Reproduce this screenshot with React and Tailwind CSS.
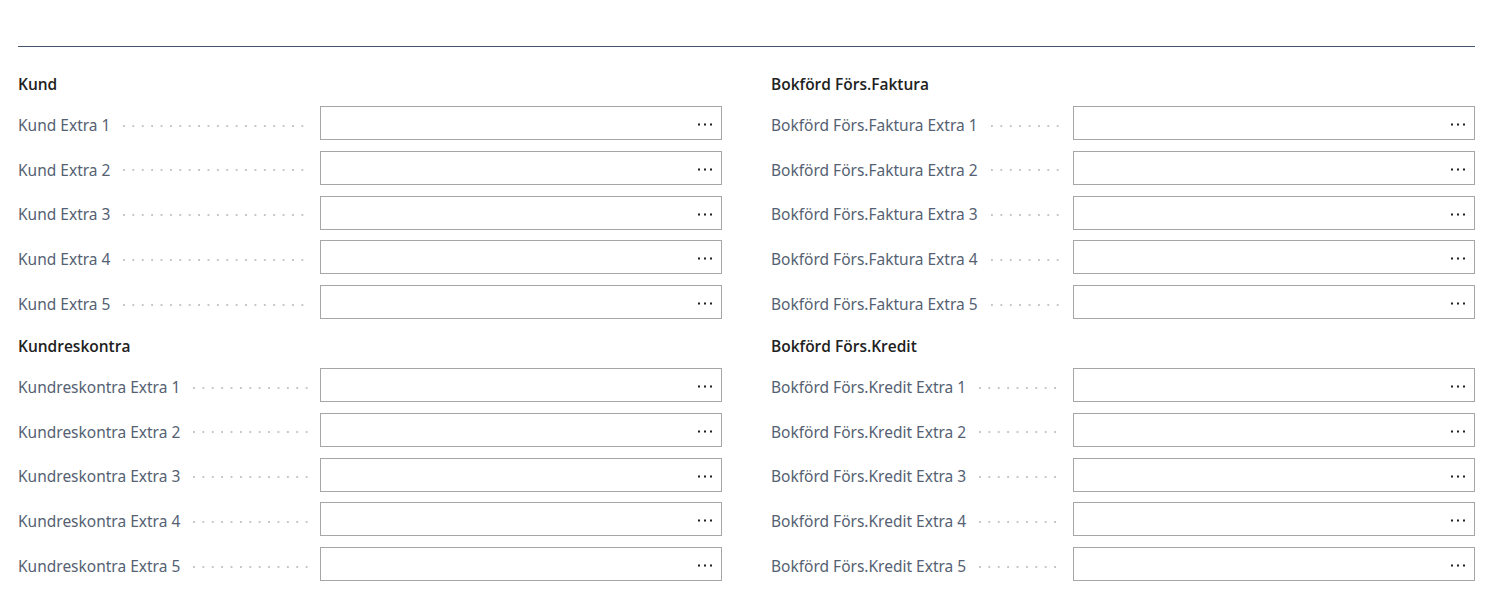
const groups = [
  [
    { title: "Kund", prefix: "Kund Extra" },
    { title: "Kundreskontra", prefix: "Kundreskontra Extra" },
  ],
  [
    { title: "Bokförd Förs.Faktura", prefix: "Bokförd Förs.Faktura Extra" },
    { title: "Bokförd Förs.Kredit", prefix: "Bokförd Förs.Kredit Extra" },
  ],
];

function Field({ label }) {
  return (
    <div className="flex items-center h-[34px]">
      <div className="flex items-center w-[302px] shrink-0 pr-[10px] pt-[5px]">
        <span className="text-[15.5px] text-[#556172] whitespace-nowrap">{label}</span>
        <span className="flex-1 ml-[13px] h-[2px] bg-[linear-gradient(to_right,#c6c6c6_1.5px,transparent_1.5px)] bg-[length:9.4px_2px] bg-repeat-x" />
      </div>
      <div className="flex-1 h-[34px] border border-[#a6a6a6] bg-white flex items-center justify-end pr-[9px] pt-[3px]">
        <svg width="14" height="3" viewBox="0 0 14 3" className="text-[#212121]">
          <rect x="0" y="0.5" width="2" height="2" fill="currentColor" />
          <rect x="6" y="0.5" width="2" height="2" fill="currentColor" />
          <rect x="12" y="0.5" width="2" height="2" fill="currentColor" />
        </svg>
      </div>
    </div>
  );
}

function Section({ title, prefix, first }) {
  return (
    <div className={first ? "" : "mt-[17px]"}>
      <h3
        className="text-[15.5px] leading-5 font-semibold text-[#212121]"
        style={{ fontFamily: '"Open Sans", "Noto Sans", sans-serif' }}
      >
        {title}
      </h3>
      <div className="mt-3 flex flex-col gap-[10.75px]">
        {[1, 2, 3, 4, 5].map((n) => (
          <Field key={n} label={`${prefix} ${n}`} />
        ))}
      </div>
    </div>
  );
}

export default function App() {
  return (
    <div
      className="min-h-screen bg-white pl-[18px] pr-[12px] pt-[46px]"
      style={{ fontFamily: '"Noto Sans", "Open Sans", sans-serif' }}
    >
      <div className="border-t border-[#44546a]" />
      <div className="grid grid-cols-2 gap-x-[49px] pt-[27px]">
        {groups.map((col, i) => (
          <div key={i}>
            {col.map((s, j) => (
              <Section key={s.title} title={s.title} prefix={s.prefix} first={j === 0} />
            ))}
          </div>
        ))}
      </div>
    </div>
  );
}
